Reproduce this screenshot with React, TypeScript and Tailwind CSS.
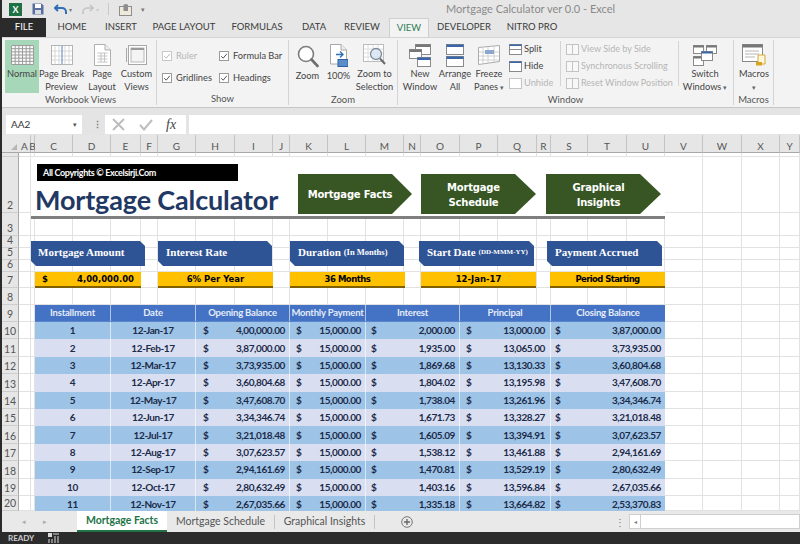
import React from "react";

const columns = ["A","B","C","D","E","F","G","H","I","J","K","L","M","N","O","P","Q","R","S","T","U","V","W","X","Y"];
const rowLabels = ["","2","3","4","5","6","7","8","9","10","11","12","13","14","15","16","17","18","19","20"];
const data = [
  ["1","12-Jan-17","4,00,000.00","2,000.00","13,000.00","3,87,000.00"],
  ["2","12-Feb-17","3,87,000.00","1,935.00","13,065.00","3,73,935.00"],
  ["3","12-Mar-17","3,73,935.00","1,869.68","13,130.33","3,60,804.68"],
  ["4","12-Apr-17","3,60,804.68","1,804.02","13,195.98","3,47,608.70"],
  ["5","12-May-17","3,47,608.70","1,738.04","13,261.96","3,34,346.74"],
  ["6","12-Jun-17","3,34,346.74","1,671.73","13,328.27","3,21,018.48"],
  ["7","12-Jul-17","3,21,018.48","1,605.09","13,394.91","3,07,623.57"],
  ["8","12-Aug-17","3,07,623.57","1,538.12","13,461.88","2,94,161.69"],
  ["9","12-Sep-17","2,94,161.69","1,470.81","13,529.19","2,80,632.49"],
  ["10","12-Oct-17","2,80,632.49","1,403.16","13,596.84","2,67,035.66"],
  ["11","12-Nov-17","2,67,035.66","1,335.18","13,664.82","2,53,370.83"],
];

function Check({ on = true }: { on?: boolean }) {
  return (
    <svg width="10" height="10" viewBox="0 0 10 10" className="shrink-0">
      <rect x="0.5" y="0.5" width="9" height="9" fill="#fff" stroke={on ? "#9a9a9a" : "#c8c8c8"} />
      <path d="M2.2 5.2 4.2 7.2 7.8 2.8" fill="none" stroke={on ? "#555" : "#bbb"} strokeWidth="1" />
    </svg>
  );
}

function GridIcon({ w = 22, h = 20, cols = 6, rows = 6, stroke = "#b4b4b4", fill = "#fff" }: { w?: number; h?: number; cols?: number; rows?: number; stroke?: string; fill?: string }) {
  const lines = [];
  for (let i = 0; i <= cols; i++) lines.push(<line key={"c" + i} x1={0.5 + (i * (w - 1)) / cols} x2={0.5 + (i * (w - 1)) / cols} y1="0.5" y2={h - 0.5} stroke={stroke} />);
  for (let i = 0; i <= rows; i++) lines.push(<line key={"r" + i} y1={0.5 + (i * (h - 1)) / rows} y2={0.5 + (i * (h - 1)) / rows} x1="0.5" x2={w - 0.5} stroke={stroke} />);
  return (
    <svg width={w} height={h} viewBox={`0 0 ${w} ${h}`}>
      <rect width={w} height={h} fill={fill} />
      {lines}
    </svg>
  );
}

const NormalIcon = () => <GridIcon w={23} h={20} cols={6} rows={6} stroke="#9c9c9c" fill="#fafafa" />;

const PageBreakIcon = () => (
  <svg width="22" height="20" viewBox="0 0 22 20">
    <rect x="0.5" y="0.5" width="21" height="19" fill="#fff" stroke="#b4b4b4" />
    <path d="M4 1v18M8 1v18M14 1v18M18 1v18M1 6h20M1 11h20M1 15h20" stroke="#d7d7d7" />
    <path d="M11 1v18" stroke="#8fa9cf" strokeWidth="1.5" />
  </svg>
);

const PageLayoutIcon = () => (
  <svg width="17" height="22" viewBox="0 0 17 22">
    <path d="M0.5 0.5H11L16.5 6V21.5H0.5Z" fill="#fff" stroke="#b0b0b0" />
    <path d="M11 0.5V6H16.5" fill="#eee" stroke="#b0b0b0" />
    <path d="M3.5 9H13.5M3.5 12H13.5M3.5 15H13.5M3.5 18H13.5M7 9V18M10.5 9V18" stroke="#c4c4c4" />
  </svg>
);

const CustomViewsIcon = () => (
  <svg width="21" height="20" viewBox="0 0 21 20">
    <rect x="2.5" y="0.5" width="18" height="19" fill="#fff" stroke="#a8a8a8" />
    <rect x="5" y="3" width="13" height="14" fill="#f4f4f4" stroke="#b8b8b8" />
    <rect x="5" y="3" width="13" height="2" fill="#9a9a9a" />
    <path d="M0.5 3V17" stroke="#a8a8a8" />
  </svg>
);

const MagnifierIcon = () => (
  <svg width="22" height="23" viewBox="0 0 22 23">
    <circle cx="9" cy="9" r="7.5" fill="#fff" stroke="#7d7d7d" strokeWidth="1.6" />
    <path d="M14.5 14.5 20.5 21" stroke="#6f6f6f" strokeWidth="2.6" strokeLinecap="round" />
  </svg>
);

const HundredIcon = () => (
  <svg width="18" height="25" viewBox="0 0 18 25">
    <path d="M0.5 0.5H11L16.5 6V20H0.5Z" fill="#fff" stroke="#a8a8a8" />
    <path d="M11 0.5V6H16.5" fill="#eee" stroke="#a8a8a8" />
    <path d="M6 10.5H13M10 7.5 13 10.5 10 13.5" fill="none" stroke="#2f6fb5" strokeWidth="1.4" />
    <rect x="8" y="15.5" width="10" height="7" fill="#5b8ec9" stroke="#2f5f9e" />
  </svg>
);

const ZoomSelIcon = () => (
  <svg width="24" height="23" viewBox="0 0 24 23">
    <rect x="0.5" y="0.5" width="20" height="17" fill="#fff" stroke="#bcbcbc" />
    <path d="M5 1v16M10 1v16M15 1v16M1 5h19M1 9h19M1 13h19" stroke="#dedede" />
    <circle cx="13" cy="10" r="5.5" fill="#d6e6f5" fillOpacity="0.8" stroke="#7d8a96" strokeWidth="1.3" />
    <path d="M17 14.5 22 20" stroke="#6a6a6a" strokeWidth="2" />
  </svg>
);

const NewWindowIcon = () => (
  <svg width="22" height="23" viewBox="0 0 22 23">
    <rect x="6.5" y="0.5" width="15" height="10" fill="#fff" stroke="#8a8a8a" />
    <rect x="6.5" y="0.5" width="15" height="2.5" fill="#777" />
    <rect x="0.5" y="5.5" width="12" height="9" fill="#fff" stroke="#8a8a8a" />
    <rect x="0.5" y="5.5" width="12" height="2.5" fill="#777" />
    <rect x="8.5" y="13.5" width="13" height="9" fill="#fff" stroke="#8a8a8a" />
    <rect x="8.5" y="13.5" width="13" height="2.5" fill="#3a67a8" />
  </svg>
);

const ArrangeIcon = () => (
  <svg width="18" height="23" viewBox="0 0 18 23">
    <rect x="0.5" y="0.5" width="17" height="10" fill="#fff" stroke="#8a8a8a" />
    <rect x="0.5" y="0.5" width="17" height="2.5" fill="#3a67a8" />
    <rect x="0.5" y="12.5" width="17" height="10" fill="#fff" stroke="#8a8a8a" />
    <rect x="0.5" y="12.5" width="17" height="2.5" fill="#3a67a8" />
  </svg>
);

const FreezeIcon = () => (
  <svg width="22" height="21" viewBox="0 0 22 21">
    <path d="M0.5 2.5 21.5 0.5V16.5L0.5 19.5Z" fill="#fff" stroke="#aaa" />
    <path d="M5 2V19M10 2V18M16 1V17M1 7H21M1 11H21M1 15H21" stroke="#d0d0d0" />
    <rect x="7" y="5" width="9" height="4" fill="#8ba7cc" />
  </svg>
);

const SmallWin = ({ top = "#3a67a8", mid = false, off = false }: { top?: string; mid?: boolean; off?: boolean }) => (
  <svg width="13" height="11" viewBox="0 0 13 11" className="shrink-0">
    <rect x="0.5" y="0.5" width="12" height="10" fill="#fff" stroke={off ? "#c4c4c4" : "#8a8a8a"} />
    {!off && <rect x="0.5" y="0.5" width="12" height="1.5" fill={top} />}
    {mid && <line x1="0" x2="13" y1="5.5" y2="5.5" stroke="#8a8a8a" />}
  </svg>
);

const DisabledDoc = () => (
  <svg width="13" height="11" viewBox="0 0 13 11" className="shrink-0">
    <rect x="0.5" y="0.5" width="6" height="10" fill="#f8f8f8" stroke="#c4c4c4" />
    <rect x="6.5" y="0.5" width="6" height="10" fill="#f8f8f8" stroke="#c4c4c4" />
  </svg>
);

const SwitchIcon = () => (
  <svg width="24" height="21" viewBox="0 0 24 21">
    <rect x="0.5" y="0.5" width="10" height="8" fill="#fff" stroke="#8a8a8a" />
    <rect x="0.5" y="0.5" width="10" height="2" fill="#777" />
    <rect x="13.5" y="0.5" width="10" height="8" fill="#fff" stroke="#8a8a8a" />
    <rect x="13.5" y="0.5" width="10" height="2" fill="#777" />
    <rect x="0.5" y="11.5" width="10" height="9" fill="#fff" stroke="#8a8a8a" />
    <rect x="0.5" y="11.5" width="10" height="2" fill="#777" />
    <rect x="8.5" y="6.5" width="11" height="9" fill="#fff" stroke="#8a8a8a" />
    <rect x="8.5" y="6.5" width="11" height="2" fill="#3a67a8" />
  </svg>
);

const MacrosIcon = () => (
  <svg width="25" height="22" viewBox="0 0 25 22">
    <rect x="0.5" y="0.5" width="20" height="17" fill="#fff" stroke="#8a8a8a" />
    <rect x="0.5" y="0.5" width="20" height="3" fill="#777" />
    <path d="M3 7H17M3 10H17M3 13H13" stroke="#b5b5b5" />
    <path d="M16 11H23V20H16Z" fill="#fff6dc" stroke="#d4a93a" />
    <path d="M14 18H20V21.5H14Z" fill="#d9a321" />
  </svg>
);

function BigButton({ icon, lines, w, active = false, arrow = false }: { icon: React.ReactNode; lines: string[]; w: string; active?: boolean; arrow?: boolean }) {
  return (
    <div className={`${w} h-[53px] flex flex-col items-center shrink-0 ${active ? "bg-[#a6d7b8]" : ""}`}>
      <div className="h-[26px] mt-[3px] flex items-center justify-center">{icon}</div>
      <div className="text-center leading-[12.5px] whitespace-nowrap mt-[1px]">
        {lines.map((l, i) => (
          <div key={l + i}>
            {l}
            {arrow && i === lines.length - 1 && <span className="text-[7px] text-[#666]"> ▾</span>}
          </div>
        ))}
      </div>
    </div>
  );
}

function Group({ label, w, children }: { label: string; w: string; children: React.ReactNode }) {
  return (
    <div className={`${w} shrink-0 h-[65px] mt-[2px] border-r border-[#d4d4d4] flex flex-col`}>
      <div className="h-[54px] flex">{children}</div>
      <div className="text-center text-[9.5px] leading-[13px] text-[#555]">{label}</div>
    </div>
  );
}

function Arrow({ lines, cls }: { lines: string[]; cls: string }) {
  return (
    <div className={`${cls} h-[40px] bg-[#375623] [clip-path:polygon(0_0,94px_0,100%_50%,94px_100%,0_100%)] flex flex-col items-center justify-center pr-[10px] pt-[1px] text-white font-bold text-[10px] tracking-[-0.2px] leading-[15px] font-['DejaVu_Sans',sans-serif]`}>
      {lines.map((l) => (
        <div key={l} className="whitespace-nowrap">{l}</div>
      ))}
    </div>
  );
}

function Card({ cls, pad, title, sub, subSize = "text-[8.5px]" }: { cls: string; pad: string; title: string; sub?: string; subSize?: string }) {
  return (
    <div className={`${cls} h-[25px] pb-[2px] bg-[#2f5496] [clip-path:polygon(0_0,calc(100%-5px)_0,100%_5px,100%_100%,5px_100%,0_calc(100%-5px))] flex items-center ${pad} text-white font-bold text-[11px] whitespace-nowrap font-['Liberation_Serif',serif]`}>
      <span>{title}</span>
      {sub && <span className={`${subSize} ml-[3px]`}>{sub}</span>}
    </div>
  );
}

function Bar({ cls, children }: { cls: string; children: React.ReactNode }) {
  return (
    <div className={`${cls} h-[16px] pt-[1px] bg-[#ffc000] border-b-2 border-[#7f6000] flex items-center justify-center text-[8.5px] font-bold text-black whitespace-nowrap font-['DejaVu_Sans',sans-serif]`}>
      {children}
    </div>
  );
}

function Money({ value, cls }: { value: string; cls: string }) {
  return (
    <div className={`${cls} flex justify-between items-center border-r border-white/60`}>
      <span>$</span>
      <span>{value}</span>
    </div>
  );
}

export default function App() {
  return (
    <div className="w-[800px] h-[544px] bg-[#2b2b2b] pl-[2px] flex flex-col overflow-hidden text-[9.25px] text-[#444] font-['Lato','Noto_Sans',sans-serif]">
      {/* title bar */}
      <div className="h-[18px] bg-[#e6e6e6] flex items-center shrink-0">
        <div className="ml-[7px] w-[13px] h-[13px] bg-[#1e7145] flex items-center justify-center text-white text-[9px] font-bold leading-none">X</div>
        <svg width="12" height="12" viewBox="0 0 12 12" className="ml-[10px]">
          <path d="M0.5 0.5H9.5L11.5 2.5V11.5H0.5Z" fill="#5a6f9e" />
          <rect x="3" y="1" width="6" height="4" fill="#fff" />
          <rect x="3" y="7" width="6" height="4" fill="#d8dce6" />
        </svg>
        <svg width="13" height="11" viewBox="0 0 13 11" className="ml-[10px]">
          <path d="M4 1 1 4 4 7M1.5 4H8C10 4 12 5.5 12 8V10" fill="none" stroke="#2f6fb5" strokeWidth="2" />
        </svg>
        <span className="ml-[2px] text-[6px] text-[#777]">▾</span>
        <svg width="12" height="10" viewBox="0 0 12 10" className="ml-[10px]">
          <path d="M8 1 11 4 8 7M11 4H5C3 4 1 5.5 1 8V10" fill="none" stroke="#c4c4c4" strokeWidth="1.6" />
        </svg>
        <span className="ml-[2px] text-[6px] text-[#ccc]">▾</span>
        <div className="ml-[9px] w-px h-[12px] bg-[#c8c8c8]" />
        <svg width="13" height="13" viewBox="0 0 13 13" className="ml-[10px]">
          <rect x="0.5" y="3.5" width="12" height="9" fill="#efe9dc" stroke="#8d8d8d" />
          <path d="M4.5 8V1.5H6V1H7.5V1.5H9V8Z" fill="#8d8d8d" />
        </svg>
        <span className="ml-[9px] w-[5px] text-[7px] text-[#777] leading-none">▾</span>
        <div className="ml-[300px] text-[11px] text-[#8a8a8a] whitespace-nowrap">Mortgage Calculator ver 0.0 - Excel</div>
      </div>

      {/* tabs */}
      <div className="h-[19px] bg-[#e6e6e6] flex items-stretch shrink-0 text-[9.5px] text-[#3a3a3a]">
        <div className="w-[44px] bg-[#2b2b2b] text-white flex items-center justify-center">FILE</div>
        <div className="w-[52px] flex items-center justify-center">HOME</div>
        <div className="w-[46px] flex items-center justify-center">INSERT</div>
        <div className="w-[80px] flex items-center justify-center">PAGE LAYOUT</div>
        <div className="w-[66px] flex items-center justify-center">FORMULAS</div>
        <div className="w-[48px] flex items-center justify-center">DATA</div>
        <div className="w-[48px] flex items-center justify-center">REVIEW</div>
        <div className="ml-[3px] w-[40px] bg-[#f3f3f3] border border-b-0 border-[#cfcfcf] text-[#2f7d55] flex items-center justify-center">VIEW</div>
        <div className="w-[70px] flex items-center justify-center">DEVELOPER</div>
        <div className="w-[66px] flex items-center justify-center">NITRO PRO</div>
      </div>

      {/* ribbon */}
      <div className="h-[70px] bg-[#f3f3f3] border-t border-[#d4d4d4] flex shrink-0 pl-[3px]">
        <Group label="Workbook Views" w="w-[152px]">
          <BigButton w="w-[34px]" active icon={<NormalIcon />} lines={["Normal", "\u00a0"]} />
          <BigButton w="w-[45px]" icon={<PageBreakIcon />} lines={["Page Break", "Preview"]} />
          <BigButton w="w-[36px]" icon={<PageLayoutIcon />} lines={["Page", "Layout"]} />
          <BigButton w="w-[33px]" icon={<CustomViewsIcon />} lines={["Custom", "Views"]} />
        </Group>
        <Group label="Show" w="w-[132px]">
          <div className="pl-[5px] pt-[10px] w-[62px] flex flex-col gap-[10px]">
            <div className="flex items-center gap-[4px] h-[12px] text-[#b5b5b5]"><Check on={false} />Ruler</div>
            <div className="flex items-center gap-[4px] h-[12px]"><Check />Gridlines</div>
          </div>
          <div className="pt-[10px] flex flex-col gap-[10px]">
            <div className="flex items-center gap-[4px] h-[12px] whitespace-nowrap"><Check />Formula Bar</div>
            <div className="flex items-center gap-[4px] h-[12px]"><Check />Headings</div>
          </div>
        </Group>
        <Group label="Zoom" w="w-[109px]">
          <div className="w-[4px]" />
          <BigButton w="w-[29px]" icon={<MagnifierIcon />} lines={["Zoom"]} />
          <BigButton w="w-[33px]" icon={<HundredIcon />} lines={["100%"]} />
          <BigButton w="w-[39px]" icon={<ZoomSelIcon />} lines={["Zoom to", "Selection"]} />
        </Group>
        <Group label="Window" w="w-[336px]">
          <div className="w-[4px]" />
          <BigButton w="w-[36px]" icon={<NewWindowIcon />} lines={["New", "Window"]} />
          <BigButton w="w-[34px]" icon={<ArrangeIcon />} lines={["Arrange", "All"]} />
          <BigButton w="w-[34px]" arrow icon={<FreezeIcon />} lines={["Freeze", "Panes"]} />
          <div className="ml-[3px] w-[52px] pt-[2px] flex flex-col gap-[5px] border-r border-[#d4d4d4] h-[45px] mt-[1px]">
            <div className="flex items-center gap-[2px] h-[12px]"><SmallWin mid />Split</div>
            <div className="flex items-center gap-[2px] h-[12px]"><SmallWin />Hide</div>
            <div className="flex items-center gap-[2px] h-[12px] text-[#b5b5b5]"><SmallWin off />Unhide</div>
          </div>
          <div className="ml-[5px] w-[113px] pt-[2px] flex flex-col gap-[5px] border-r border-[#d4d4d4] h-[45px] mt-[1px] text-[#b5b5b5] text-[9px] whitespace-nowrap">
            <div className="flex items-center gap-[2px] h-[12px]"><DisabledDoc />View Side by Side</div>
            <div className="flex items-center gap-[2px] h-[12px]"><DisabledDoc />Synchronous Scrolling</div>
            <div className="flex items-center gap-[2px] h-[12px]"><DisabledDoc />Reset Window Position</div>
          </div>
          <div className="w-[4px]" />
          <BigButton w="w-[44px]" arrow icon={<SwitchIcon />} lines={["Switch", "Windows"]} />
        </Group>
        <Group label="Macros" w="w-[40px]">
          <BigButton w="w-[40px]" arrow icon={<MacrosIcon />} lines={["Macros", ""]} />
        </Group>
      </div>

      {/* formula bar */}
      <div className="h-[28px] pt-[6px] bg-[#e4e4e4] flex items-center shrink-0 border-t border-[#c6c6c6]">
        <div className="ml-[4px] w-[76px] h-[19px] bg-white flex items-center justify-between px-[5px] text-[#333] text-[10px]">
          AA2 <span className="text-[7px] text-[#555]">▾</span>
        </div>
        <div className="ml-[11px] w-[3px] text-[#777] text-[9px] leading-[5px] font-bold">⋮</div>
        <div className="ml-[9px] w-[81px] h-[19px] bg-white flex items-center pl-[7px]">
          <svg width="13" height="13" viewBox="0 0 13 13"><path d="M1 1 12 12M12 1 1 12" stroke="#bdbdbd" strokeWidth="2" /></svg>
          <svg width="14" height="12" viewBox="0 0 14 12" className="ml-[14px]"><path d="M1 6 5 10.5 13 1" fill="none" stroke="#bdbdbd" strokeWidth="2" /></svg>
          <span className="ml-[13px] italic text-[14px] leading-none text-[#444] font-['Liberation_Serif',serif]">fx</span>
        </div>
        <div className="ml-[3px] flex-1 h-[19px] bg-white" />
      </div>

      {/* sheet */}
      <div className="h-[376px] overflow-hidden bg-white shrink-0 grid grid-cols-[17px_12px_4px_38px_38px_30px_17px_38px_39px_38px_17px_38px_38px_38px_17px_39px_38px_39px_14px_37px_39px_38px_38px_39px_38px_20px] grid-rows-[18px_4px_56px_23px_12px_12px_12px_16px_17px_17px_17.4px_17.4px_17.4px_17.4px_17.4px_17.4px_17.4px_17.4px_17.4px_17.4px_15px]">
        {/* gridlines + headers */}
        <div className="[grid-area:1/1/-1/-1] grid grid-cols-subgrid grid-rows-subgrid">
          <div className="bg-[#e6e6e6] border-b border-[#a8a8a8] flex items-end justify-end pr-[2px] pb-[2px]">
            <div className="w-[6px] h-[6px] bg-[#b5b5b5] [clip-path:polygon(100%_0,100%_100%,0_100%)]" />
          </div>
          {columns.map((c) => (
            <div key={c} className="bg-[#e6e6e6] pt-[5px] border-b border-[#a8a8a8] border-r border-r-[#c4c4c4] flex items-center justify-center text-[#555] text-[10px] leading-none">{c}</div>
          ))}
          {rowLabels.map((label, r) => (
            <React.Fragment key={r}>
              <div className="bg-[#e6e6e6] border-r border-[#a8a8a8] border-b border-b-[#cdcdcd] flex items-end justify-center text-[#555] text-[10.5px] leading-[11px] pb-[1px]">{label}</div>
              {columns.map((c) => (
                <div key={c} className="border-r border-b border-[#e2e2e2]" />
              ))}
            </React.Fragment>
          ))}
        </div>

        {/* row 2 content */}
        <div className="[grid-area:3/3/5/23] h-[62px] border-b-[3px] border-[#7f7f7f] flex bg-white">
          <div className="w-[267px] shrink-0 pl-[6px] pt-[7px] font-['Lato',sans-serif] font-bold">
            <div className="w-[201px] h-[17px] bg-black flex items-center pl-[6px] text-white text-[9px] tracking-[-0.35px] whitespace-nowrap">All Copyrights © Excelsirji.Com</div>
            <div className="-ml-[2px] text-[27px] tracking-[-0.15px] leading-[33px] mt-[2px] text-[#1f3864] whitespace-nowrap">Mortgage Calculator</div>
          </div>
          <div className="flex pt-[17px]">
            <Arrow cls="w-[114px]" lines={["Mortgage Facts"]} />
            <Arrow cls="w-[115px] ml-[9px]" lines={["Mortgage", "Schedule"]} />
            <Arrow cls="w-[115px] ml-[10px]" lines={["Graphical", "Insights"]} />
          </div>
        </div>

        {/* cards rows 4-6 */}
        <div className="[grid-area:5/3/8/23] flex pt-[5px]">
          <Card cls="w-[114px]" pad="pl-[7px]" title="Mortgage Amount" />
          <Card cls="w-[114px] ml-[13px]" pad="pl-[8px]" title="Interest Rate" />
          <Card cls="w-[114px] ml-[18px]" pad="pl-[8px]" title="Duration" sub="(In Months)" />
          <Card cls="w-[115px] ml-[15px]" pad="pl-[8px]" title="Start Date" sub="(DD-MMM-YY)" subSize="text-[7px]" />
          <Card cls="w-[115px] ml-[13px]" pad="pl-[8px]" title="Payment Accrued" />
        </div>

        {/* yellow bars row 7 */}
        <div className="[grid-area:8/4/9/23] flex">
          <Bar cls="w-[106px] !justify-between px-[7px]"><span>$</span><span>4,00,000.00</span></Bar>
          <Bar cls="w-[115px] ml-[17px]">6% Per Year</Bar>
          <Bar cls="w-[115px] ml-[17px] tracking-[-0.5px]">36 Months</Bar>
          <Bar cls="w-[115px] ml-[16px]">12-Jan-17</Bar>
          <Bar cls="w-[115px] ml-[14px] tracking-[-0.6px]">Period Starting</Bar>
        </div>

        {/* table */}
        <div className="[grid-area:10/4/22/23] flex flex-col overflow-hidden font-bold text-[10px] tracking-[-0.4px] text-[#1c2b4a]">
          <div className="h-[17px] shrink-0 bg-[#4472c4] text-[#e4ecf8] text-[9.5px] tracking-[-0.2px] grid grid-cols-[76px_85px_94px_76px_94px_91px_114px] border-b border-[#5b86cc]">
            {["Installment","Date","Opening Balance","Monthly Payment","Interest","Principal","Closing Balance"].map((h) => (
              <div key={h} className="flex items-center justify-center border-r border-white/60 whitespace-nowrap last:border-r-0">{h}</div>
            ))}
          </div>
          {data.map((row, i) => (
            <div key={row[0]} className={`h-[17.4px] shrink-0 grid grid-cols-[76px_85px_94px_76px_94px_91px_114px] ${i % 2 === 0 ? "bg-[#9dc3e6]" : "bg-[#d9dff1]"}`}>
              <div className="flex items-center justify-center border-r border-white/60">{row[0]}</div>
              <div className="flex items-center justify-center border-r border-white/60">{row[1]}</div>
              <Money cls="pl-[7px] pr-[4px]" value={row[2]} />
              <Money cls="pl-[6px] pr-[4px]" value="15,000.00" />
              <Money cls="pl-[5px] pr-[4px]" value={row[3]} />
              <Money cls="pl-[6px] pr-[5px]" value={row[4]} />
              <Money cls="pl-[4px] pr-[4px] !border-r-0" value={row[5]} />
            </div>
          ))}
        </div>
      </div>

      {/* sheet tabs */}
      <div className="h-[21px] bg-[#e9e9e9] flex items-center shrink-0 text-[10.5px] text-[#555]">
        <span className="ml-[20px] w-[4px] text-[7px] text-[#aaa]">◂</span>
        <span className="ml-[17px] w-[4px] text-[7px] text-[#aaa]">▸</span>
        <div className="ml-[30px] w-[90px] h-full bg-white border-b-2 border-[#217346] text-[#217346] font-bold flex items-center justify-center whitespace-nowrap">Mortgage Facts</div>
        <div className="w-[108px] flex items-center justify-center whitespace-nowrap border-r border-[#c4c4c4] h-[14px]">Mortgage Schedule</div>
        <div className="w-[100px] flex items-center justify-center whitespace-nowrap border-r border-[#c4c4c4] h-[14px]">Graphical Insights</div>
        <svg width="12" height="12" viewBox="0 0 12 12" className="ml-[26px]">
          <circle cx="6" cy="6" r="5.3" fill="none" stroke="#777" />
          <path d="M3 6H9M6 3V9" stroke="#666" strokeWidth="1.3" />
        </svg>
        <span className="ml-[202px] w-[6px] text-center text-[10px] leading-none text-[#777]">⋮</span>
        <div className="ml-[8px] flex-1 h-[15px] bg-white border border-[#cfcfcf] flex items-center">
          <div className="w-[11px] h-full border-r border-[#cfcfcf] flex items-center justify-center text-[6px] text-[#777]">◂</div>
        </div>
      </div>

      {/* status bar */}
      <div className="flex-1 bg-[#2c2c2c] flex items-center text-[#cfcfcf] text-[8px] font-bold">
        <span className="ml-[6px]">READY</span>
        <svg width="11" height="10" viewBox="0 0 11 10" className="ml-[14px]">
          <rect x="0" y="0" width="4" height="4" fill="#d8d8d8" />
          <path d="M5 1H11M1 6V10M4 6V10M7 3V10M10 3V10" stroke="#d8d8d8" />
        </svg>
      </div>
    </div>
  );
}
